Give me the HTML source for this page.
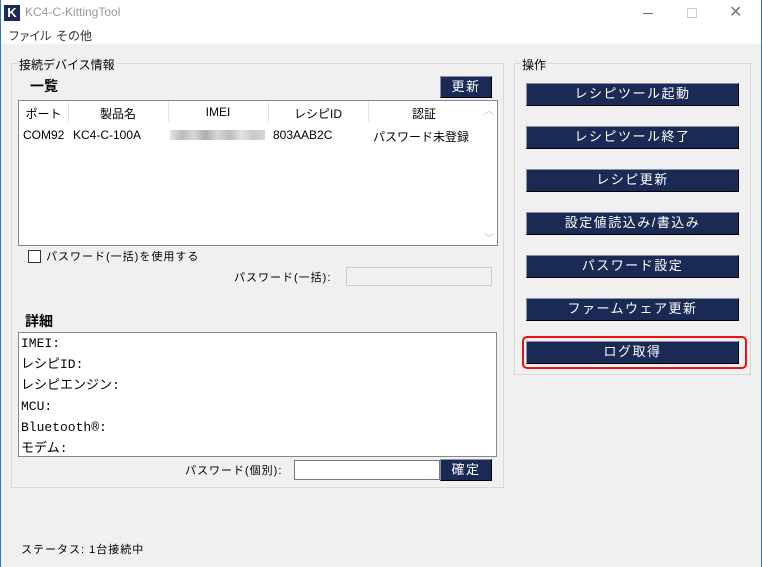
<!DOCTYPE html>
<html><head><meta charset="utf-8"><style>
*{margin:0;padding:0;box-sizing:border-box}
body{width:762px;height:567px;background:#f0f0f0;font-family:"Liberation Sans","Noto Sans CJK JP",sans-serif;font-size:12px;color:#000;position:relative;overflow:hidden}
.a{position:absolute;white-space:nowrap}
.btn{position:absolute;background:#1b2a54;color:#fff;border:1px solid #000;border-top-color:#8890a8;border-left-color:#8890a8;text-align:center;font-size:13px;letter-spacing:1.5px}
.grp{position:absolute;border:1px solid #d8d8d8}
.lbl{position:absolute;background:#f0f0f0;padding:0 1px;font-size:12px}
</style></head><body>
<div class="a" style="left:0;top:0;width:762px;height:44px;background:#fff"></div>
<div class="a" style="left:0;top:0;width:1px;height:567px;background:#2b79c4"></div>
<div class="a" style="left:761px;top:0;width:1px;height:567px;background:#2b79c4"></div>
<div class="a" style="left:4px;top:5px;width:16px;height:16px;background:#1b2a54;color:#fff;font-weight:bold;font-size:13px;text-align:center;line-height:16px">K</div>
<div class="a" style="left:25px;top:5px;color:#999;font-size:12px">KC4-C-KittingTool</div>
<div class="a" style="left:643px;top:13px;width:10px;height:1px;background:#666"></div>
<div class="a" style="left:687px;top:8px;width:10px;height:10px;border:1px solid #ccc"></div>
<div class="a" style="left:729px;top:2px;color:#777;font-size:16px">✕</div>
<div class="a" style="left:8px;top:27px;color:#333;font-size:12px;letter-spacing:-1.5px">ファイル</div>
<div class="a" style="left:56px;top:27px;color:#333;font-size:12px">その他</div>

<div class="grp" style="left:11px;top:63px;width:493px;height:425px"></div>
<div class="lbl" style="left:18px;top:56px">接続デバイス情報</div>
<div class="a" style="left:30px;top:76px;font-weight:bold;font-size:14px">一覧</div>
<div class="btn" style="left:440px;top:76px;width:52px;height:22px;line-height:19px">更新</div>
<div class="a" style="left:18px;top:100px;width:480px;height:146px;background:#fff;border:1px solid #828790"></div>
<div class="a" style="left:480px;top:101px;width:17px;height:144px;background:#fff"></div>
<div class="a" style="left:484px;top:102px;color:#bbb;font-size:10px">︿</div>
<div class="a" style="left:484px;top:230px;color:#bbb;font-size:10px">﹀</div>
<div class="a" style="left:19px;top:101px;width:461px;height:21px;background:#fff"></div>
<div class="a" style="left:68px;top:101px;width:1px;height:21px;background:#e5e5e5"></div>
<div class="a" style="left:168px;top:101px;width:1px;height:21px;background:#e5e5e5"></div>
<div class="a" style="left:268px;top:101px;width:1px;height:21px;background:#e5e5e5"></div>
<div class="a" style="left:368px;top:101px;width:1px;height:21px;background:#e5e5e5"></div>
<div class="a" style="left:19px;top:105px;width:49px;text-align:center">ポート</div>
<div class="a" style="left:68px;top:105px;width:100px;text-align:center">製品名</div>
<div class="a" style="left:168px;top:105px;width:100px;text-align:center">IMEI</div>
<div class="a" style="left:268px;top:105px;width:100px;text-align:center">レシピID</div>
<div class="a" style="left:368px;top:105px;width:112px;text-align:center">認証</div>
<div class="a" style="left:23px;top:128px">COM92</div>
<div class="a" style="left:73px;top:128px">KC4-C-100A</div>
<div class="a" style="left:170px;top:130px;width:95px;height:10px;background:linear-gradient(90deg,#ddd,#aaa,#ccc,#999,#ccc,#aaa,#ddd,#bbb,#ccc);opacity:.8"></div>
<div class="a" style="left:273px;top:128px">803AAB2C</div>
<div class="a" style="left:373px;top:128px">パスワード未登録</div>

<div class="a" style="left:28px;top:250px;width:13px;height:13px;background:#fff;border:1px solid #333"></div>
<div class="a" style="left:46px;top:248px;font-size:11px;letter-spacing:1px">パスワード(一括)を使用する</div>
<div class="a" style="left:234px;top:269px;font-size:11px;letter-spacing:1px">パスワード(一括):</div>
<div class="a" style="left:346px;top:267px;width:146px;height:19px;border:1px solid #ccc;background:#f0f0f0"></div>

<div class="a" style="left:25px;top:311px;font-weight:bold;font-size:14px">詳細</div>
<div class="a" style="left:18px;top:332px;width:479px;height:125px;background:#fff;border:1px solid #828790"></div>
<div class="a" style="left:21px;top:333px;font-family:'Liberation Mono','Noto Sans CJK JP',monospace;font-size:13px;line-height:21px">IMEI:<br>レシピID:<br>レシピエンジン:<br>MCU:<br>Bluetooth®:<br>モデム:</div>
<div class="a" style="left:185px;top:462px;font-size:11px;letter-spacing:1px">パスワード(個別):</div>
<div class="a" style="left:294px;top:460px;width:146px;height:20px;border:1px solid #7a7a7a;background:#fff"></div>
<div class="btn" style="left:440px;top:459px;width:52px;height:22px;line-height:19px">確定</div>

<div class="grp" style="left:514px;top:63px;width:237px;height:312px"></div>
<div class="lbl" style="left:521px;top:56px">操作</div>
<div class="btn" style="left:526px;top:83px;width:213px;height:23px;line-height:20px">レシピツール起動</div>
<div class="btn" style="left:526px;top:126px;width:213px;height:23px;line-height:20px">レシピツール終了</div>
<div class="btn" style="left:526px;top:169px;width:213px;height:23px;line-height:20px">レシピ更新</div>
<div class="btn" style="left:526px;top:212px;width:213px;height:23px;line-height:20px">設定値読込み/書込み</div>
<div class="btn" style="left:526px;top:255px;width:213px;height:23px;line-height:20px">パスワード設定</div>
<div class="btn" style="left:526px;top:298px;width:213px;height:23px;line-height:20px">ファームウェア更新</div>
<div class="a" style="left:522px;top:336px;width:225px;height:33px;border:2px solid #f01010;border-radius:5px"></div>
<div class="btn" style="left:526px;top:341px;width:213px;height:23px;line-height:20px">ログ取得</div>

<div class="a" style="left:21px;top:541px;font-size:11px;letter-spacing:1px">ステータス: 1台接続中</div>
</body></html>
